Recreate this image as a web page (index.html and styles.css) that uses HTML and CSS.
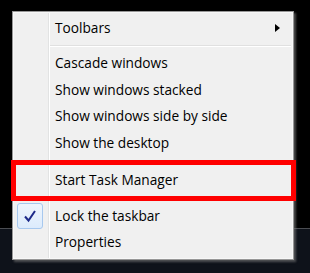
FILE: index.html
```html
<!DOCTYPE html>
<html lang="en">
<head>
  <meta charset="UTF-8">
  <title>Taskbar menu</title>
  <link rel="stylesheet" href="styles.css">
</head>
<body>
  <div class="desktop"></div>
  <div class="taskbar"></div>

  <div class="menu">
    <div class="item first">Toolbars<span class="arrow"></span></div>
    <div class="sep"></div>
    <div class="item">Cascade windows</div>
    <div class="item">Show windows stacked</div>
    <div class="item">Show windows side by side</div>
    <div class="item">Show the desktop</div>
    <div class="sep wide"></div>
    <div class="item marked">Start Task Manager</div>
    <div class="sep mid"></div>
    <div class="item checked">
      <span class="check">
        <svg width="14" height="14" viewBox="0 0 14 14">
          <path d="M2 7.5 L5.5 11.5 L12 2" fill="none" stroke="#1d2a8a" stroke-width="2"/>
        </svg>
      </span>
      Lock the taskbar
    </div>
    <div class="item">Properties</div>
  </div>
</body>
</html>
```

FILE: styles.css
```css
body {
  margin: 0;
  background: #000;
  font-family: "Open Sans", "DejaVu Sans", sans-serif;
  font-size: 13.7px;
  color: #000;
  position: relative;
  height: 273px;
  overflow: hidden;
}
.desktop {
  height: 228px;
  background: #000;
}
.taskbar {
  height: 44px;
  background: #0e121a;
  border-top: 1px solid #4b4d52;
}
.menu {
  position: absolute;
  left: 12px;
  top: 11px;
  width: 280px;
  padding: 3px 0 3.5px;
  background: #f0f0f0;
  border: 1px solid #979797;
  box-shadow: inset 0 0 0 1px #f7f7f7, 2px 2px 2px rgba(120, 120, 120, 0.6);
  background-image: linear-gradient(to right, transparent 35px, #e2e3e3 35px, #e2e3e3 36px, #fff 36px, #fff 37px, transparent 37px);
}
.item {
  position: relative;
  height: 26.5px;
  line-height: 26.5px;
  padding-left: 42px;
  white-space: nowrap;
}
.item.first {
  height: 26px;
  line-height: 26px;
}
.item.checked {
  height: 25.5px;
  line-height: 25.5px;
}
.arrow {
  position: absolute;
  right: 13px;
  top: 8.5px;
  width: 0;
  height: 0;
  border-top: 4.5px solid transparent;
  border-bottom: 4.5px solid transparent;
  border-left: 5px solid #000;
}
.sep {
  height: 9px;
  margin-left: 37px;
  margin-right: 2px;
  background: linear-gradient(#e0e0e0, #e0e0e0) 0 4px / 100% 1px no-repeat,
              linear-gradient(#fff, #fff) 0 5px / 100% 1px no-repeat;
}
.sep.wide {
  height: 10.5px;
}
.sep.mid {
  height: 10px;
}
.marked::after {
  content: "";
  position: absolute;
  left: -2px;
  right: -3px;
  top: -6.5px;
  bottom: -8px;
  border: 5px solid #ff0000;
}
.check {
  position: absolute;
  left: 4px;
  top: 0;
  width: 24px;
  height: 24px;
  border: 1px solid #a7c8ee;
  border-radius: 3px;
  background: linear-gradient(#eef5fd, #dcebfc);
  display: flex;
  align-items: center;
  justify-content: center;
}
```
